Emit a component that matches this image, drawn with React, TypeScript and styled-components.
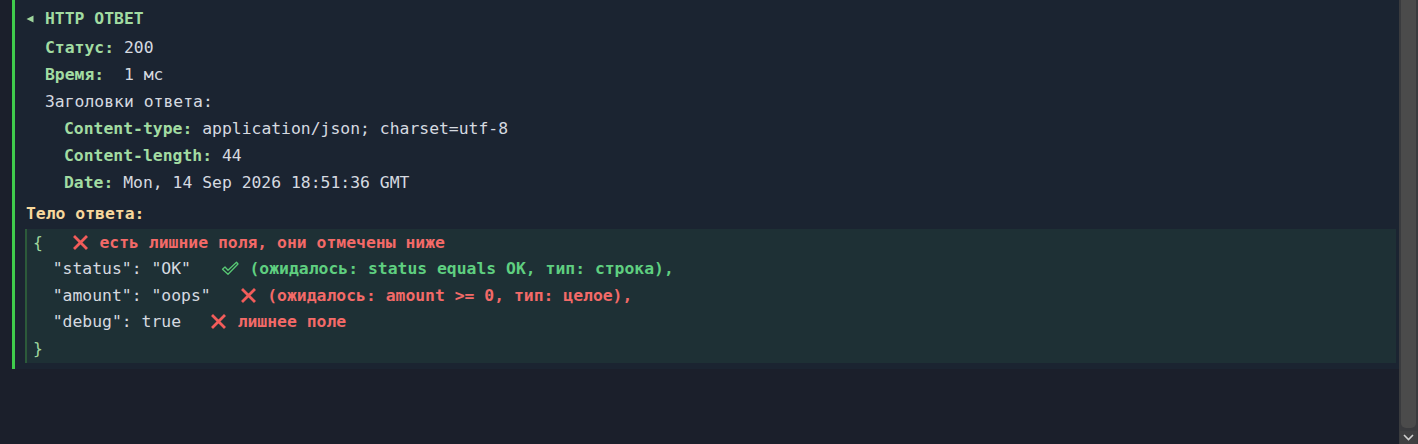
import React from "react";
import styled, { createGlobalStyle } from "styled-components";

const Global = createGlobalStyle`
  html, body { margin: 0; padding: 0; background: #1b1f2b; overflow: hidden; }
  #root { height: 444px; }
`;

const Page = styled.div`
  display: flex;
  height: 444px;
  font-family: "DejaVu Sans Mono", "Liberation Mono", monospace;
  font-size: 16.4px;
  color: #d6dae0;
`;

const Main = styled.main`
  flex: 1;
  min-width: 0;
  padding-left: 12px;
  background: #1b1f2b;
`;

const Panel = styled.section`
  border-left: 3px solid #3fcc4c;
  background: #1b2431;
  padding: 5px 3px 6px 11px;
`;

const Header = styled.div`
  display: flex;
  align-items: center;
  gap: 11px;
  height: 27px;
  margin-bottom: 2px;
`;

const HeaderTitle = styled.span`
  font-weight: bold;
  color: #a2dca2;
`;

const Line = styled.div<{ $indent?: number }>`
  line-height: 27px;
  height: 27px;
  white-space: pre;
  padding-left: ${(p) => (p.$indent ?? 0) * 19}px;
`;

const Label = styled.span`
  font-weight: bold;
  color: #a2dca2;
`;

const BodyTitle = styled.div`
  line-height: 27px;
  font-weight: bold;
  color: #f8d89c;
  margin-top: 4px;
  margin-bottom: 2px;
`;

const BodyBlock = styled.div`
  margin-right: 0;
  margin-left: -1px;
  border-left: 2px solid #2c5a3a;
  background: #1e3035;
  padding: 0 6px 1.5px;
`;

const CodeLine = styled.div`
  display: flex;
  align-items: center;
  height: 26.5px;
  white-space: pre;
`;

const Code = styled.span`
  white-space: pre;
`;

const Brace = styled.span`
  color: #9fd69d;
  white-space: pre;
`;

const Note = styled.span<{ $tone: "bad" | "good" }>`
  display: inline-flex;
  align-items: center;
  font-weight: bold;
  color: ${(p) => (p.$tone === "bad" ? "#f36a68" : "#5fcf80")};
`;

const IconBox = styled.span<{ $w: number; $gap: number }>`
  display: inline-flex;
  width: ${(p) => p.$w}px;
  margin-right: ${(p) => p.$gap}px;
  justify-content: center;
`;

const Scrollbar = styled.aside`
  width: 19px;
  display: flex;
  flex-direction: column;
  background: #3a3b3e;
  padding: 0 2px 0 2px;
  box-sizing: border-box;
`;

const Thumb = styled.div`
  flex: 1;
  background: #4b4b4b;
  border-radius: 0 0 5px 5px;
  margin-bottom: 3px;
`;

const ArrowButton = styled.div`
  height: 13px;
  display: flex;
  align-items: center;
  justify-content: center;
  background: #3f3f41;
  margin: 0 -1px;
`;

const Cross = () => (
  <svg width="15" height="15" viewBox="0 0 15 15">
    <path d="M2 2 L13 13 M13 2 L2 13" stroke="#f25c5a" strokeWidth="2.8" strokeLinecap="square" />
  </svg>
);

const Check = () => (
  <svg width="18" height="15" viewBox="0 0 18 15">
    <path
      d="M1.5 8.2 L4 6 L7 9.2 L15.5 1.2 L17 3 L7 13.2 Z"
      fill="none"
      stroke="#58c874"
      strokeWidth="1.3"
      strokeLinejoin="round"
    />
  </svg>
);

const Caret = () => (
  <svg width="8" height="8" viewBox="0 0 8 8">
    <path d="M0.5 4 L7.5 0.5 L7.5 7.5 Z" fill="#9fd69d" />
  </svg>
);

const BadNote: React.FC<{ children: React.ReactNode }> = ({ children }) => (
  <Note $tone="bad">
    <IconBox $w={16} $gap={11}>
      <Cross />
    </IconBox>
    {children}
  </Note>
);

const GoodNote: React.FC<{ children: React.ReactNode }> = ({ children }) => (
  <Note $tone="good">
    <IconBox $w={18} $gap={11}>
      <Check />
    </IconBox>
    {children}
  </Note>
);

const headers = [
  ["Content-type:", "application/json; charset=utf-8"],
  ["Content-length:", "44"],
  ["Date:", "Mon, 14 Sep 2026 18:51:36 GMT"],
];

export default function App() {
  return (
    <>
      <Global />
      <Page>
        <Main>
          <Panel>
            <Header>
              <Caret />
              <HeaderTitle>HTTP ОТВЕТ</HeaderTitle>
            </Header>
            <Line $indent={1}>
              <Label>Статус:</Label> 200
            </Line>
            <Line $indent={1}>
              <Label>Время:</Label>  1 мс
            </Line>
            <Line $indent={1}>Заголовки ответа:</Line>
            {headers.map(([k, v]) => (
              <Line key={k} $indent={2}>
                <Label>{k}</Label> {v}
              </Line>
            ))}
            <BodyTitle>Тело ответа:</BodyTitle>
            <BodyBlock>
              <CodeLine>
                <Brace>{"{"}</Brace>
                <Code>{"   "}</Code>
                <BadNote>есть лишние поля, они отмечены ниже</BadNote>
              </CodeLine>
              <CodeLine>
                <Code>{'  "status": "OK"   '}</Code>
                <GoodNote>(ожидалось: status equals OK, тип: строка),</GoodNote>
              </CodeLine>
              <CodeLine>
                <Code>{'  "amount": "oops"   '}</Code>
                <BadNote>(ожидалось: amount &gt;= 0, тип: целое),</BadNote>
              </CodeLine>
              <CodeLine>
                <Code>{'  "debug": true   '}</Code>
                <BadNote>лишнее поле</BadNote>
              </CodeLine>
              <CodeLine>
                <Brace>{"}"}</Brace>
              </CodeLine>
            </BodyBlock>
          </Panel>
        </Main>
        <Scrollbar>
          <Thumb />
          <ArrowButton>
            <svg width="11" height="7" viewBox="0 0 11 7">
              <path d="M1 1 L5.5 5.5 L10 1" fill="none" stroke="#d0d0d0" strokeWidth="1.6" />
            </svg>
          </ArrowButton>
        </Scrollbar>
      </Page>
    </>
  );
}
